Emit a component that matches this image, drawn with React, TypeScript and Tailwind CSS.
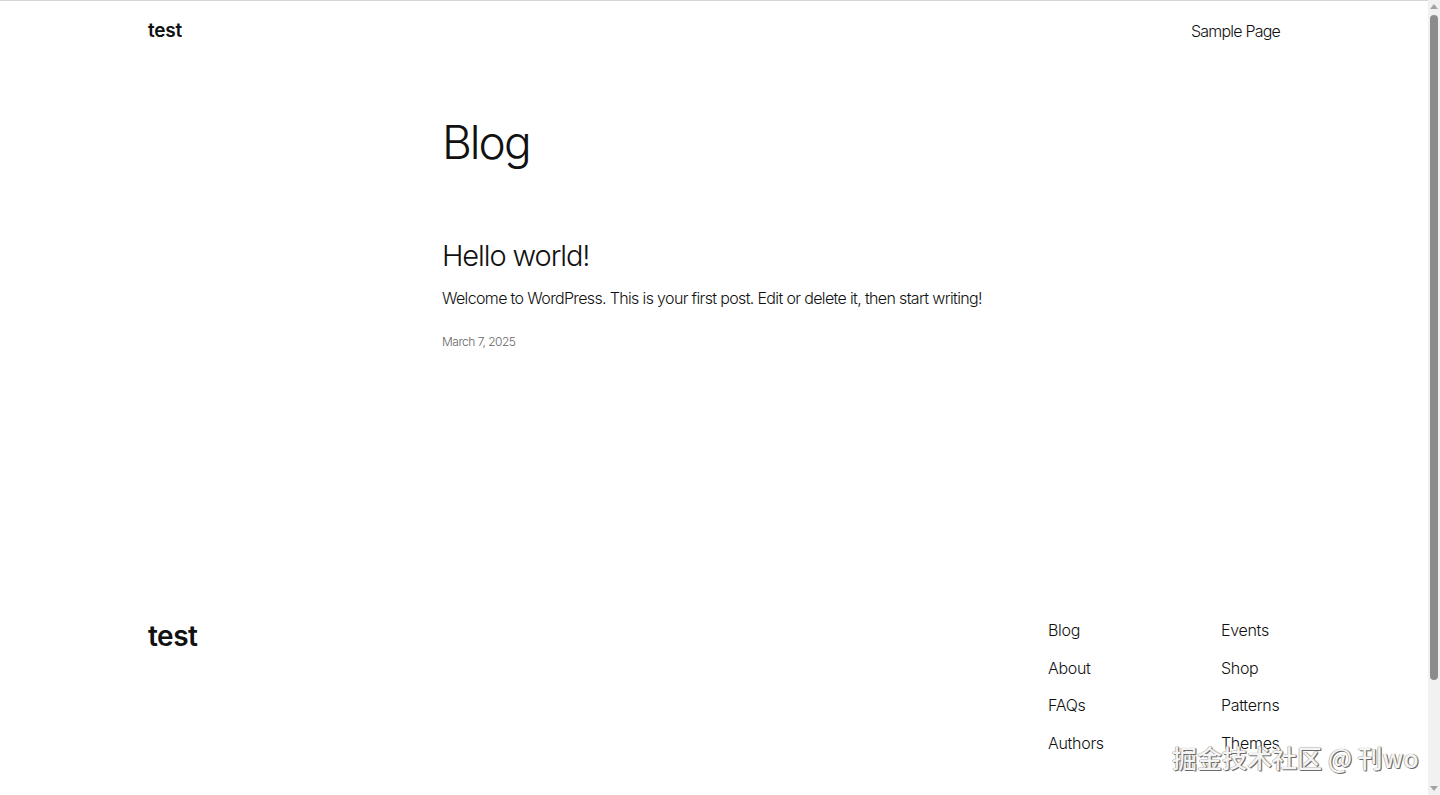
import React from "react";

const FONT = { fontFamily: "Inter, 'Noto Sans', sans-serif" };

const FOOTER_LEFT = ["Blog", "About", "FAQs", "Authors"];
const FOOTER_RIGHT = ["Events", "Shop", "Patterns", "Themes"];

function Scrollbar() {
  return (
    <div className="flex w-[12px] shrink-0 flex-col items-center bg-[#f1f1f1]">
      <div className="mt-[4px] h-0 w-0 border-x-[4px] border-b-[5px] border-x-transparent border-b-[#a3a3a3]" />
      <div className="mt-[6px] h-[665px] w-[8px] rounded-full bg-[#8c8c8c]" />
      <div className="flex-1" />
      <div className="mb-[4px] h-0 w-0 border-x-[4px] border-t-[5px] border-x-transparent border-t-[#a3a3a3]" />
    </div>
  );
}

export default function App() {
  return (
    <div className="relative flex h-[795px] w-[1440px] overflow-hidden bg-white text-[#111]" style={FONT}>
      <div className="flex flex-1 flex-col border-t border-[#d6d6d6]">
        <header className="flex h-[59px] items-center justify-between px-[148px]">
          <a className="pt-[2px] text-[19px] font-semibold tracking-[-0.2px]">test</a>
          <nav className="text-[16px] font-light tracking-[-0.8px]">Sample Page</nav>
        </header>

        <main className="mx-auto w-[544px]">
          <h1 className="mt-[59px] text-[46px] font-light leading-none tracking-[-2px]">Blog</h1>
          <article className="mt-[76px]">
            <h2 className="text-[29px] font-light leading-none tracking-[-1.1px]">Hello world!</h2>
            <p className="mt-[20px] whitespace-nowrap text-[16px] font-light leading-none tracking-[-0.65px]">
              Welcome to WordPress. This is your first post. Edit or delete it, then start writing!
            </p>
            <p className="mt-[30px] text-[12px] font-light leading-none tracking-[-0.5px] text-[#666]">
              March 7, 2025
            </p>
          </article>
        </main>

        <footer className="mt-auto flex justify-between px-[148px] pb-[23px]">
          <div className="text-[28px] font-semibold leading-none tracking-[-0.5px]">test</div>
          <div className="flex">
            {[FOOTER_LEFT, FOOTER_RIGHT].map((col, i) => (
              <ul key={i} className={i === 0 ? "w-[173px]" : "w-[59px]"}>
                {col.map((item) => (
                  <li key={item} className="h-[37.5px] text-[16px] font-light leading-none tracking-[-0.3px]">
                    {item}
                  </li>
                ))}
              </ul>
            ))}
          </div>
        </footer>
      </div>
      <Scrollbar />

      <div
        className="absolute left-[1172px] top-[739px] text-[25px] font-medium tracking-[0px] text-[#f4f4f4]"
        style={{
          fontFamily: "'Noto Sans CJK SC', 'Liberation Sans', sans-serif",
          textShadow: "1px 1px 0 #6b6b6b, -0.5px -0.5px 0 #9a9a9a, 1px 0 1px #777",
        }}
      >
        掘金技术社区 @ 刊wo
      </div>
    </div>
  );
}
